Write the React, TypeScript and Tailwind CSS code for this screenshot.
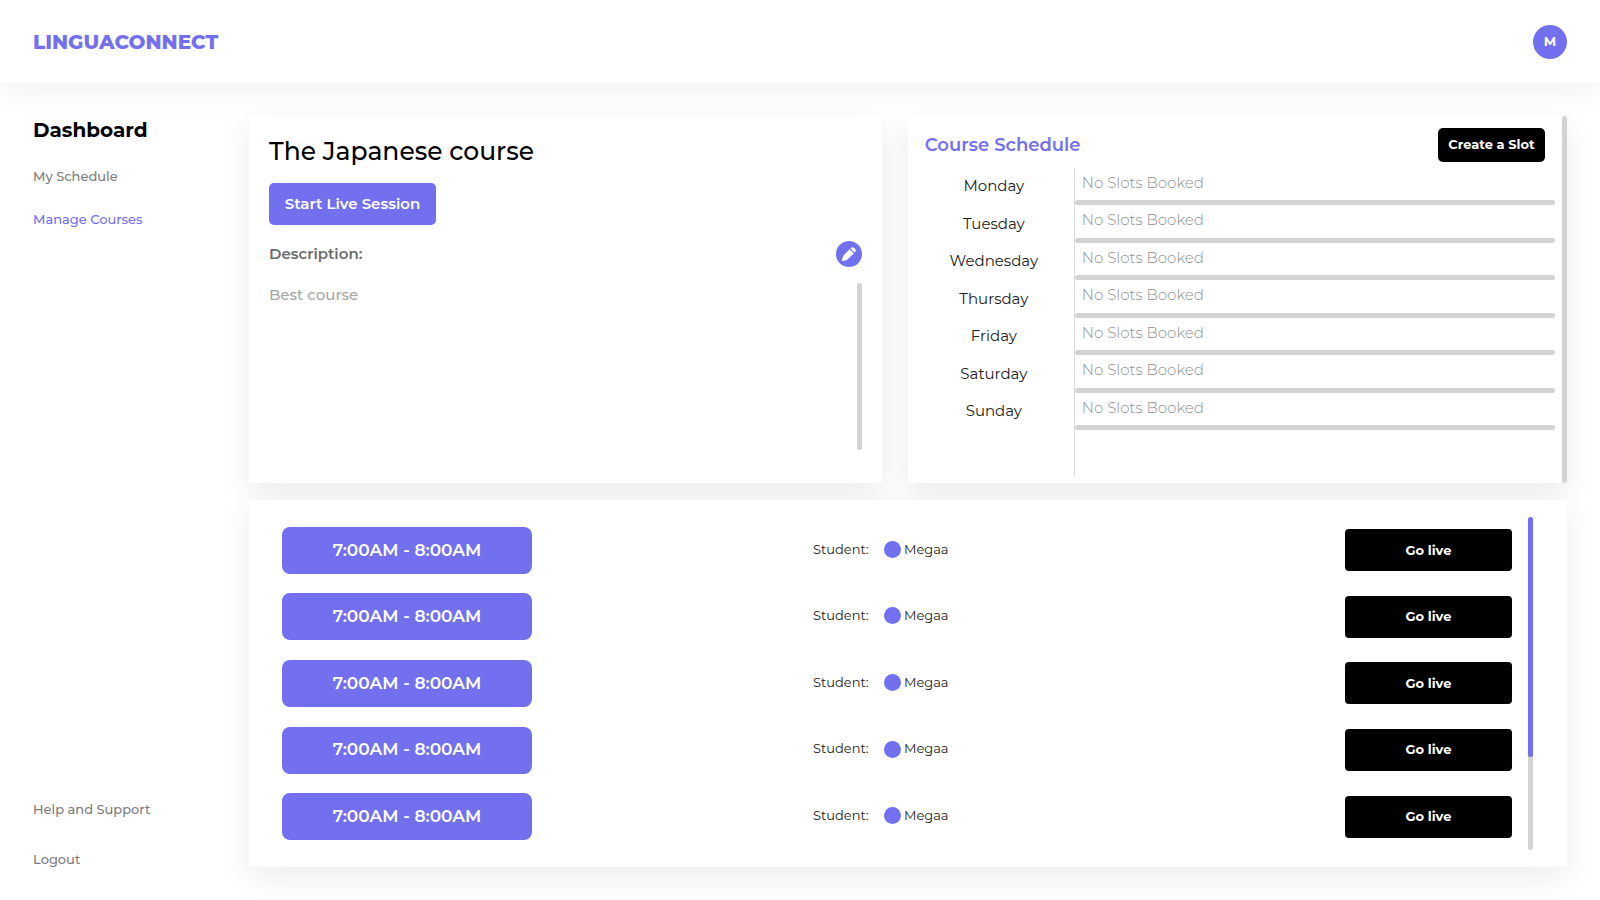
const days = ["Monday", "Tuesday", "Wednesday", "Thursday", "Friday", "Saturday", "Sunday"];

const sessions = Array.from({ length: 5 }, (_, id) => ({
  id,
  time: "7:00AM - 8:00AM",
  student: "Megaa",
}));

const cardShadow = "bg-white shadow-[0_10px_30px_rgba(0,0,0,0.08)]";

function PencilIcon() {
  return (
    <svg viewBox="0 0 14 14" className="h-[14px] w-[14px]" fill="currentColor" aria-hidden="true">
      <path d="M7.6 2.2 11.8 6.4 5.2 12.8Q4.8 13.2 4.2 13.3L.9 14Q-.1 14.1.1 13.1L.8 9.9Q.9 9.3 1.3 8.8z" />
      <path d="M8.4 1.4 9.3.7Q10.6-.4 11.9.8L13.2 2.1Q14.4 3.4 13.3 4.7L12.6 5.6z" />
    </svg>
  );
}

function Header() {
  return (
    <header className="relative z-10 flex h-[83px] items-center justify-between bg-white px-[33px] shadow-[0_10px_30px_rgba(0,0,0,0.05)]">
      <a href="#" className="text-xl leading-6 font-extrabold text-[#7270ef]">
        LINGUACONNECT
      </a>
      <button
        type="button"
        aria-label="Account"
        className="h-[34px] w-[34px] rounded-full bg-[#7270ef] text-[13px] font-bold text-white"
      >
        M
      </button>
    </header>
  );
}

function Sidebar() {
  return (
    <aside className="flex w-[216px] shrink-0 flex-col text-[13px] leading-5 font-medium text-[#7d7d7d]">
      <h2 className="text-xl leading-7 font-bold text-black">Dashboard</h2>
      <nav className="mt-[22px] flex flex-1 flex-col items-start">
        <a href="#">My Schedule</a>
        <a href="#" className="mt-[23px] text-[#7270ef]">
          Manage Courses
        </a>
        <a href="#" className="mt-auto">
          Help and Support
        </a>
        <a href="#" className="mt-[30px]">
          Logout
        </a>
      </nav>
    </aside>
  );
}

function CourseCard() {
  return (
    <section className={`flex flex-col px-5 pt-[19px] pb-[33px] ${cardShadow}`}>
      <h1 className="text-[25px] leading-8 font-medium text-black">The Japanese course</h1>
      <button
        type="button"
        className="mt-4 h-[42px] w-[167px] rounded-[5px] bg-[#7270ef] text-[15px] font-semibold text-white"
      >
        Start Live Session
      </button>
      <div className="mt-4 flex items-center justify-between">
        <h3 className="text-[15px] leading-6 font-semibold text-[#6b6b6b]">Description:</h3>
        <button
          type="button"
          aria-label="Edit description"
          className="flex h-[26px] w-[26px] items-center justify-center rounded-full bg-[#7270ef] text-white"
        >
          <PencilIcon />
        </button>
      </div>
      <div className="mt-4 flex flex-1 justify-between">
        <p className="text-[15px] leading-6 font-medium text-[#a8a8a8]">Best course</p>
        <div className="w-[5px] rounded-full bg-[#d3d3d3]" />
      </div>
    </section>
  );
}

function ScheduleCard() {
  return (
    <section className={`flex rounded-[5px] ${cardShadow}`}>
      <div className="flex flex-1 flex-col pt-3 pb-[7px]">
        <div className="flex items-center justify-between px-[17px]">
          <h2 className="text-lg leading-6 font-semibold text-[#7270ef]">Course Schedule</h2>
          <button
            type="button"
            className="h-[34px] w-[107px] rounded-[5px] bg-black text-[13px] font-bold text-white"
          >
            Create a Slot
          </button>
        </div>
        <div className="mt-[6px] flex flex-1 pr-[7px] pl-[6px] text-[15px]">
          <ul className="grid h-[262px] w-[160px] grid-rows-7 text-center text-[#222]">
            {days.map((day) => (
              <li key={day} className="flex items-center justify-center">
                {day}
              </li>
            ))}
          </ul>
          <div className="flex-1 border-l border-[#dcdcdc]">
            <ul className="grid h-[262px] grid-rows-7 font-light text-[#8f8f8f]">
              {days.map((day) => (
                <li key={day} className="flex flex-col justify-between">
                  <span className="pt-[3px] pl-[7px] leading-6">No Slots Booked</span>
                  <div className="h-[5px] rounded-full bg-[#d3d3d3]" />
                </li>
              ))}
            </ul>
          </div>
        </div>
      </div>
      <div className="w-[5px] rounded-full bg-[#d3d3d3]" />
    </section>
  );
}

function SessionsCard() {
  return (
    <section className={`flex py-[17px] pr-[34px] pl-[33px] ${cardShadow}`}>
      <ul className="grid flex-1 grid-rows-5">
        {sessions.map((session) => (
          <li key={session.id} className="flex items-center justify-between">
            <div className="flex h-[47px] w-[250px] items-center justify-center rounded-lg bg-[#7270ef] text-[17px] font-semibold text-white">
              {session.time}
            </div>
            <div className="flex w-[251px] items-center pb-[2px] text-[13px] text-[#222]">
              <span className="w-[71px]">Student:</span>
              <span className="mr-[3px] h-[17px] w-[17px] rounded-full bg-[#7270ef]" />
              <span>{session.student}</span>
            </div>
            <button
              type="button"
              className="h-[42px] w-[167px] rounded-[4px] bg-black text-[13px] font-bold text-white"
            >
              Go live
            </button>
          </li>
        ))}
      </ul>
      <div className="ml-4 w-[5px] rounded-full bg-[#d3d3d3]">
        <div className="h-[72%] rounded-full bg-[#7270ef]" />
      </div>
    </section>
  );
}

export default function App() {
  return (
    <div className="flex min-h-screen flex-col bg-white font-['Montserrat','Inter',sans-serif]">
      <Header />
      <div className="flex flex-1 px-[33px]">
        <div className="flex pt-[33px] pb-[31px]">
          <Sidebar />
        </div>
        <main className="grid flex-1 grid-rows-2 gap-[17px] pt-[33px] pb-[33px]">
          <div className="grid grid-cols-[48fr_50fr] gap-[26px]">
            <CourseCard />
            <ScheduleCard />
          </div>
          <SessionsCard />
        </main>
      </div>
    </div>
  );
}
